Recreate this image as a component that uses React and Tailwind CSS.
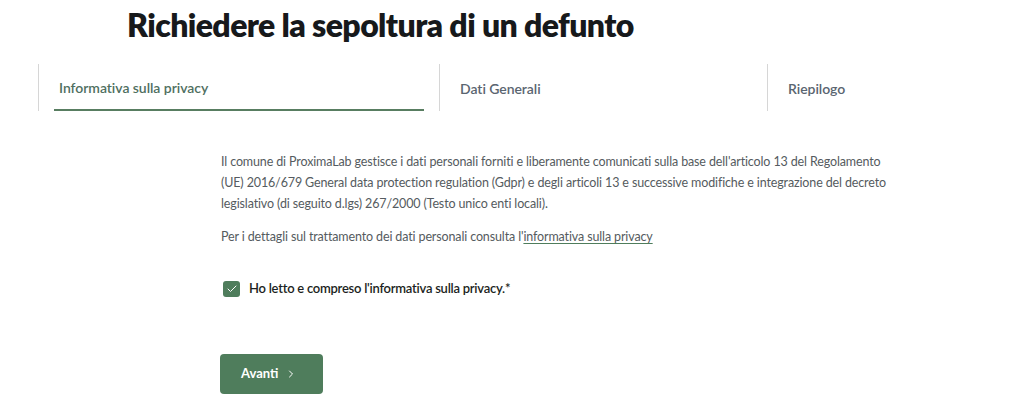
import { Check, ChevronRight } from "lucide-react";

const steps = [
  { label: "Informativa sulla privacy", width: "w-[401px]", active: true },
  { label: "Dati Generali", width: "w-[328px]" },
  { label: "Riepilogo", width: "w-[300px]" },
];

function StepTab({ label, width, active }) {
  return (
    <div className={`${width} shrink-0 border-l border-[#d6d6d6] h-[47px] px-[15px] flex flex-col`}>
      <div
        className={`flex-1 flex items-center pt-[2px] px-[5px] text-[14px] font-semibold tracking-[-0.05px] ${
          active ? "text-[#4f6f5f] border-b-2 border-[#587d61]" : "text-[#5a6570]"
        }`}
      >
        {label}
      </div>
    </div>
  );
}

export default function App() {
  return (
    <div className="w-[1020px] h-[418px] overflow-hidden bg-white font-['Lato',sans-serif]">
      <h1 className="pl-[127px] pt-[6px] h-[64px] text-[32px] font-extrabold tracking-[-0.6px] text-[#17191b] leading-[38px]">
        Richiedere la sepoltura di un defunto
      </h1>

      <div className="flex pl-[38px]">
        {steps.map((s) => (
          <StepTab key={s.label} {...s} />
        ))}
      </div>

      <div className="pl-[221px] pt-[40px] w-[900px]">
        <p className="text-[12.5px] leading-[21px] tracking-[-0.13px] text-[#555b60] w-[670px]">
          Il comune di ProximaLab gestisce i dati personali forniti e liberamente comunicati sulla base dell'articolo 13 del Regolamento (UE) 2016/679 General data protection regulation (Gdpr) e degli articoli 13 e successive modifiche e integrazione del decreto legislativo (di seguito d.lgs) 267/2000 (Testo unico enti locali).
        </p>
        <p className="mt-[12px] text-[12.5px] leading-[21px] tracking-[-0.13px] text-[#555b60]">
          Per i dettagli sul trattamento dei dati personali consulta l'
          <a href="#" className="underline decoration-[#4f7d5c] underline-offset-2">
            informativa sulla privacy
          </a>
        </p>

        <label className="mt-[32px] ml-[2px] flex items-center gap-[9px]">
          <span className="w-[17px] h-[16px] rounded-[3px] bg-[#4f7d5c] flex items-center justify-center">
            <Check className="w-[12px] h-[12px] text-white" strokeWidth={2} />
          </span>
          <span className="text-[13px] font-semibold tracking-[-0.25px] text-[#1c1f22]">
            Ho letto e compreso l'informativa sulla privacy.*
          </span>
        </label>

        <button
          type="button"
          className="mt-[55px] -ml-[1px] w-[103px] h-[40px] rounded-[4px] bg-[#4f7d5c] text-white flex items-center pl-[21px] gap-[7px] text-[13px] font-bold"
        >
          Avanti
          <ChevronRight className="w-[12px] h-[12px]" strokeWidth={2} />
        </button>
      </div>
    </div>
  );
}
